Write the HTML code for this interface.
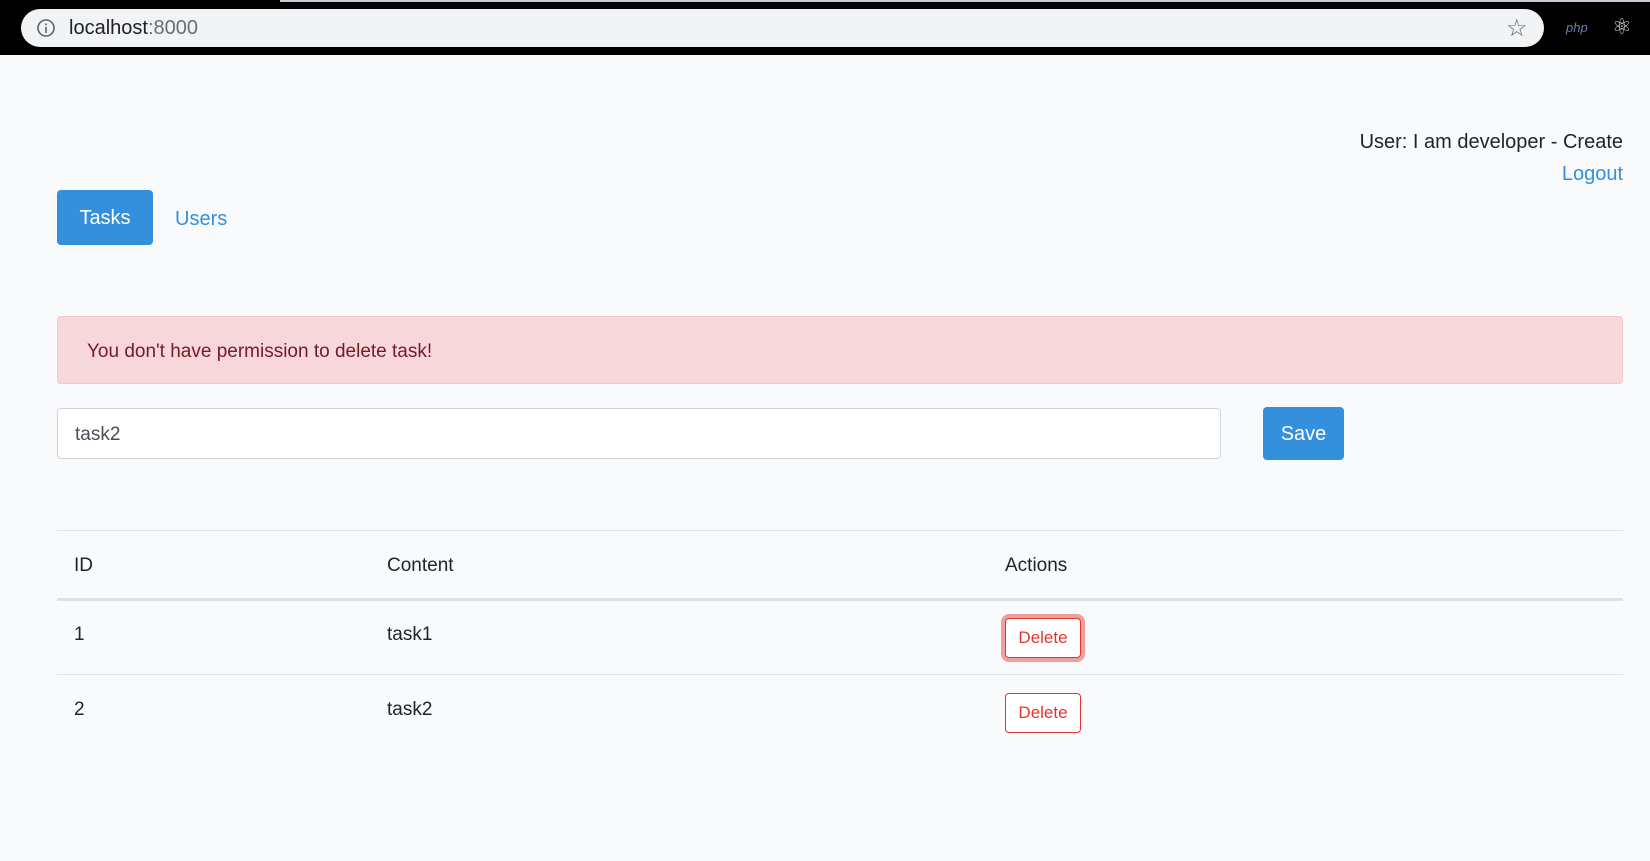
<!DOCTYPE html>
<html><head><meta charset="utf-8"><style>
*{box-sizing:border-box;margin:0;padding:0}
body{width:1650px;height:861px;background:#f8fafc;font-family:"Liberation Sans",sans-serif;color:#212529;position:relative;overflow:hidden;font-size:19px}
.abs{position:absolute}
.top{left:0;top:0;width:1650px;height:55px;background:#000}
.url{left:21px;top:9px;width:1523px;height:38px;background:#f1f3f4;border-radius:19px}
.btn{display:flex;align-items:center;justify-content:center}
.del{width:76px;height:40px;border:1px solid #e3342f;color:#e3342f;border-radius:4px;font-size:17px;background:#fff}
</style></head><body>
<div class="abs top"></div>
<div class="abs" style="left:280px;top:0;width:1370px;height:2px;background:#c9c6d6"></div>
<div class="abs url"></div>
<svg class="abs" style="left:36px;top:18px" width="20" height="20"><circle cx="10" cy="10" r="8" fill="none" stroke="#5f6368" stroke-width="1.6"/><rect x="9.2" y="9" width="1.6" height="6" fill="#5f6368"/><rect x="9.2" y="5.5" width="1.6" height="1.8" fill="#5f6368"/></svg>
<div class="abs" style="left:69px;top:17px;font-size:20px;color:#202124">localhost<span style="color:#6a6e72">:8000</span></div>
<div class="abs" style="left:1506px;top:14px;font-size:24px;color:#5f6368">☆</div>
<div class="abs" style="left:1566px;top:20px;font-size:13px;color:#6c7bb5;font-style:italic">php</div>
<div class="abs" style="left:1612px;top:14px;font-size:22px;color:#ddd">⚛</div>

<div class="abs" style="right:27px;top:131px;font-size:20px">User: I am developer - Create</div>
<div class="abs" style="right:27px;top:163px;font-size:20px;color:#3490dc">Logout</div>
<div class="abs btn" style="left:57px;top:190px;width:96px;height:55px;background:#3490dc;color:#fff;border-radius:4px;font-size:20px;padding-top:2px">Tasks</div>
<div class="abs" style="left:175px;top:208px;font-size:20px;color:#3490dc">Users</div>

<div class="abs" style="left:57px;top:316px;width:1566px;height:68px;background:#f8d7da;border:1px solid #f5c6cb;border-radius:4px;color:#721c24;font-size:19px;padding:24px 29px">You don't have permission to delete task!</div>

<div class="abs" style="left:57px;top:408px;width:1164px;height:51px;background:#fff;border:1px solid #ced4da;border-radius:4px;padding:15px 17px;font-size:19px;color:#495057">task2</div>
<div class="abs btn" style="left:1263px;top:407px;width:81px;height:53px;background:#3490dc;color:#fff;border-radius:4px;font-size:20px;padding-top:2px">Save</div>

<div class="abs" style="left:57px;top:530px;width:1566px;height:1px;background:#dee2e6"></div>
<div class="abs" style="left:74px;top:555px;font-size:19px">ID</div>
<div class="abs" style="left:387px;top:555px;font-size:19px">Content</div>
<div class="abs" style="left:1005px;top:555px;font-size:19px">Actions</div>
<div class="abs" style="left:57px;top:598px;width:1566px;height:3px;background:#dee2e6"></div>
<div class="abs" style="left:74px;top:624px">1</div>
<div class="abs" style="left:387px;top:624px">task1</div>
<div class="abs btn del" style="left:1005px;top:618px;box-shadow:0 0 0 4px rgba(227,52,47,.45)">Delete</div>
<div class="abs" style="left:57px;top:674px;width:1566px;height:1px;background:#dee2e6"></div>
<div class="abs" style="left:74px;top:699px">2</div>
<div class="abs" style="left:387px;top:699px">task2</div>
<div class="abs btn del" style="left:1005px;top:693px">Delete</div>
</body></html>
